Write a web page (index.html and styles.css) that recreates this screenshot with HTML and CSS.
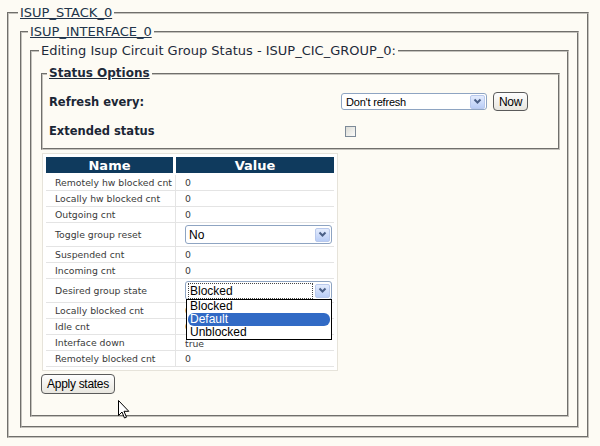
FILE: index.html
```html
<!DOCTYPE html>
<html>
<head>
<meta charset="utf-8">
<title>ISUP Circuit Group Status</title>
<link rel="stylesheet" href="styles.css">
</head>
<body>
<fieldset class="fs fs-stack">
  <legend class="lg lg-link">ISUP_STACK_0</legend>
  <fieldset class="fs fs-iface">
    <legend class="lg lg-link">ISUP_INTERFACE_0</legend>
    <fieldset class="fs fs-edit">
      <legend class="lg">Editing Isup Circuit Group Status - ISUP_CIC_GROUP_0:</legend>
      <fieldset class="fs fs-status">
        <legend class="lg lg-bold">Status Options</legend>
        <div class="opt-grid">
          <div class="opt-label">Refresh every:</div>
          <div class="opt-ctrl">
            <div class="sel sel-refresh">
              <span class="sel-text">Don't refresh</span>
              <span class="sel-btn"><svg width="9" height="7" viewBox="0 0 9 7"><polyline points="1.5,1.5 4.5,4.5 7.5,1.5" fill="none" stroke="#4a5f86" stroke-width="2"/></svg></span>
            </div>
            <button class="btn btn-now">Now</button>
          </div>
          <div class="opt-label">Extended status</div>
          <div class="opt-ctrl"><span class="chk"></span></div>
        </div>
      </fieldset>
      <div class="tbl-wrap">
        <table class="tbl">
          <thead>
            <tr><th class="c-name">Name</th><th class="c-value">Value</th></tr>
          </thead>
          <tbody>
            <tr><td class="c-name">Remotely hw blocked cnt</td><td class="c-value">0</td></tr>
            <tr><td class="c-name">Locally hw blocked cnt</td><td class="c-value">0</td></tr>
            <tr><td class="c-name">Outgoing cnt</td><td class="c-value">0</td></tr>
            <tr class="row-sel"><td class="c-name">Toggle group reset</td><td class="c-value">
              <div class="sel sel-tbl">
                <span class="sel-text">No</span>
                <span class="sel-btn"><svg width="9" height="7" viewBox="0 0 9 7"><polyline points="1.5,1.5 4.5,4.5 7.5,1.5" fill="none" stroke="#4a5f86" stroke-width="2"/></svg></span>
              </div>
            </td></tr>
            <tr><td class="c-name">Suspended cnt</td><td class="c-value">0</td></tr>
            <tr><td class="c-name">Incoming cnt</td><td class="c-value">0</td></tr>
            <tr class="row-sel"><td class="c-name">Desired group state</td><td class="c-value">
              <div class="sel sel-tbl sel-open">
                <span class="sel-text sel-focus">Blocked</span>
                <span class="sel-btn"><svg width="9" height="7" viewBox="0 0 9 7"><polyline points="1.5,1.5 4.5,4.5 7.5,1.5" fill="none" stroke="#4a5f86" stroke-width="2"/></svg></span>
                <ul class="dd-list">
                  <li class="dd-item">Blocked</li>
                  <li class="dd-item dd-active">Default</li>
                  <li class="dd-item">Unblocked</li>
                </ul>
              </div>
            </td></tr>
            <tr><td class="c-name">Locally blocked cnt</td><td class="c-value">0</td></tr>
            <tr><td class="c-name">Idle cnt</td><td class="c-value">0</td></tr>
            <tr><td class="c-name">Interface down</td><td class="c-value c-low">true</td></tr>
            <tr><td class="c-name">Remotely blocked cnt</td><td class="c-value">0</td></tr>
          </tbody>
        </table>
      </div>
      <button class="btn btn-apply">Apply states</button>
    </fieldset>
  </fieldset>
</fieldset>
<svg class="cursor" width="12" height="19" viewBox="0 0 12 19"><path d="M0.5,0.5 L0.5,15.5 L4,12 L6.5,18 L8.5,17.2 L6,11.3 L10.8,11.3 Z" fill="#fff" stroke="#000" stroke-width="1" stroke-linejoin="miter"/></svg>
</body>
</html>
```

FILE: styles.css
```css
* { box-sizing: border-box; }
html, body { margin: 0; padding: 0; }
body {
  background: #fdfbf4;
  width: 600px;
  height: 446px;
  overflow: hidden;
  position: relative;
  font-family: "DejaVu Sans", Verdana, sans-serif;
  color: #1e2a38;
}

.fs {
  margin: 0;
  min-width: 0;
  border: 2px groove #c4c2bc;
}
.fs-stack { margin: 5px 11px 0 7px; padding: 3px 8px 8px 11px; }
.fs-iface { padding: 3px 8px 9px 8px; }
.fs-edit { padding: 6px 7px 21px 9px; }
.fs-status { padding: 10px 8px 7px 6px; }

.lg {
  padding: 0 2px;
  margin-left: -2px;
  font-size: 13px;
  line-height: 16px;
  color: #1e2a3a;
}
.lg-link { text-decoration: underline; color: #22344a; }
.lg-bold { font-weight: bold; font-size: 12px; text-decoration: underline; line-height: 17px; }

.opt-grid {
  display: grid;
  grid-template-columns: 292px 1fr;
  grid-template-rows: 19px 20px;
  row-gap: 10px;
  align-items: center;
}
.opt-label { font-weight: bold; font-size: 11.5px; color: #1b2635; }
.opt-ctrl { display: flex; align-items: center; gap: 6px; }

.sel {
  position: relative;
  display: flex;
  align-items: center;
  background: #fff;
  border: 1px solid #8ea4c2;
  border-radius: 3px;
  font-family: "Liberation Sans", Arial, sans-serif;
  color: #000;
}
.sel-refresh { width: 146px; height: 17px; padding-left: 4px; font-size: 11px; letter-spacing: -0.2px; }
.sel-tbl { width: 147px; height: 19px; padding-left: 3px; font-size: 12px; }
.sel-text { flex: 1; line-height: 14px; }
.sel-focus { outline: 1px dotted #444; outline-offset: 0; margin-right: 3px; padding-left: 1px; }
.sel-btn {
  width: 15px;
  height: 14px;
  margin-right: 1px;
  border: 1px solid #b9c9ec;
  border-radius: 2px;
  background: linear-gradient(#e4ecfd, #b9cdf6);
  display: flex;
  align-items: center;
  justify-content: center;
}

.btn {
  margin: 0;
  font-family: "Liberation Sans", Arial, sans-serif;
  font-size: 12px;
  letter-spacing: -0.3px;
  color: #000;
  border: 1px solid #5a5a5a;
  border-radius: 4px;
  background: linear-gradient(#fefefe, #e8e6df);
  padding: 0 5px;
}
.btn-now { height: 19px; width: 35px; padding: 0; }
.btn-apply { height: 20px; width: 74px; padding: 0; margin-top: 3px; }

.chk {
  width: 11px;
  height: 11px;
  margin-left: 4px;
  border: 1px solid #7d8a98;
  background: linear-gradient(135deg, #dcdcd6, #fbfbf9);
}

.tbl-wrap {
  margin: 3px 0 0 1px;
  width: 296px;
  border: 1px solid #e6e3da;
  background: #fff;
  padding: 3px;
}
.tbl {
  width: 100%;
  border-collapse: separate;
  border-spacing: 0;
  table-layout: fixed;
}
.tbl th {
  height: 18px;
  padding: 0;
  background: #0f3a5d;
  color: #fff;
  font-size: 13px;
  font-weight: bold;
  line-height: 15px;
  border-bottom: 2px solid #fff;
}
.tbl th.c-name { width: 130px; border-right: 3px solid #fff; }
.tbl td {
  height: 16px;
  padding: 0 0 0 9px;
  font-size: 9.3px;
  color: #3a3a3a;
  border-bottom: 1px solid #e4e4e4;
  white-space: nowrap;
}
.tbl td.c-name { border-right: 1px solid #e4e4e4; }
.tbl td.c-value { padding-left: 9px; }
.tbl td.c-low { vertical-align: bottom; line-height: 12px; }
.tbl tr.row-sel td { height: 24px; }

.dd-list {
  position: absolute;
  left: 0;
  top: 17px;
  width: 146px;
  margin: 0;
  padding: 0 1px;
  list-style: none;
  background: #fff;
  border: 1px solid #000;
  z-index: 2;
}
.dd-item {
  height: 13px;
  line-height: 13px;
  padding-left: 2px;
  font-size: 12px;
  color: #000;
}
.dd-active {
  background: #316ac5;
  color: #fff;
  border-radius: 6px;
}

.cursor {
  position: absolute;
  left: 118px;
  top: 400px;
}
```
